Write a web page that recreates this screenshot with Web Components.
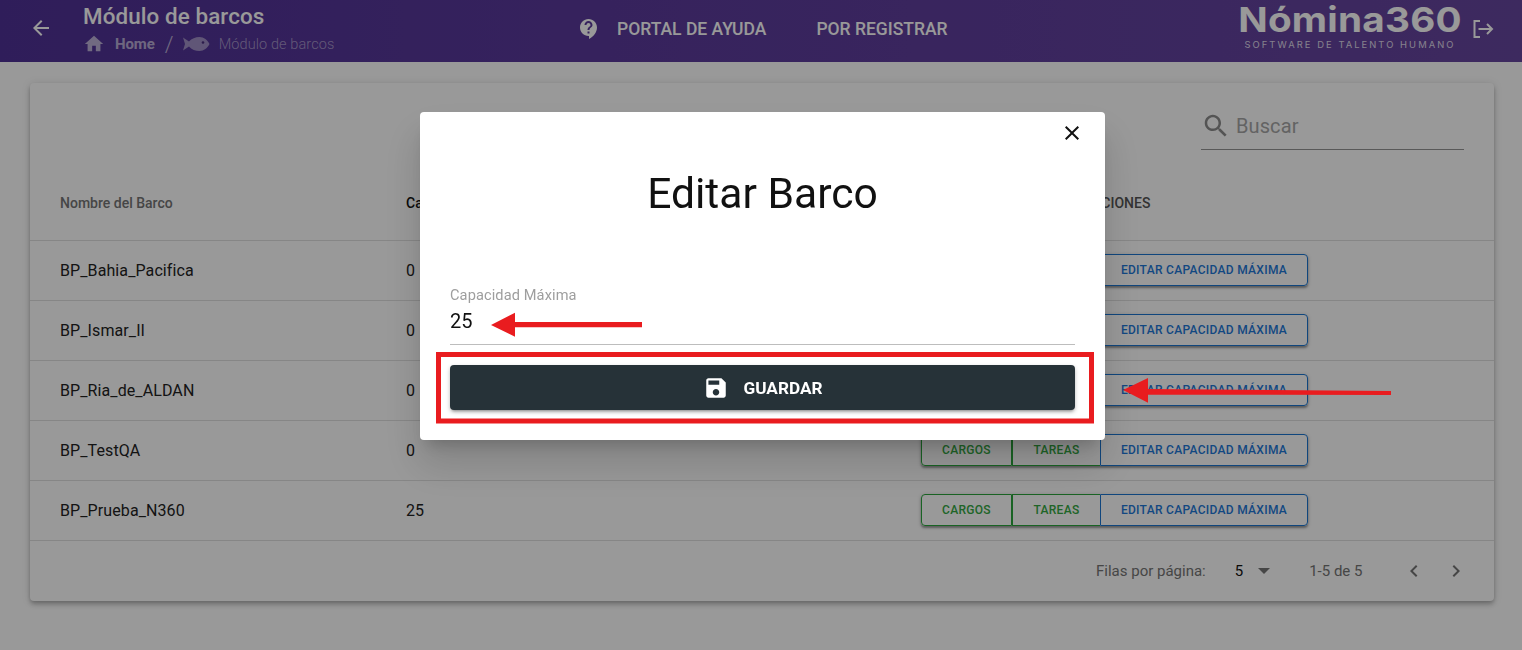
<!DOCTYPE html>
<html lang="es">
<head>
<meta charset="utf-8">
<title>Módulo de barcos</title>
<style>
  html, body { margin: 0; height: 650px; overflow: hidden; background: #fff; font-family: Roboto, "Liberation Sans", sans-serif; letter-spacing: .1px; }
</style>
</head>
<body>
<app-header></app-header>
<boats-card>
  <boat-row name="BP_Bahia_Pacifica" capacity="0"></boat-row>
  <boat-row name="BP_Ismar_II" capacity="0"></boat-row>
  <boat-row name="BP_Ria_de_ALDAN" capacity="0"></boat-row>
  <boat-row name="BP_TestQA" capacity="0"></boat-row>
  <boat-row name="BP_Prueba_N360" capacity="25"></boat-row>
</boats-card>
<edit-dialog></edit-dialog>

<script>
const appHeaderTpl = document.createElement('template')
appHeaderTpl.innerHTML = `
<style>
  :host { display: flex; align-items: stretch; height: 62px; color: #fff; background: linear-gradient(90deg, #4f3196 0%, #5b3a9c 40%, #67469f 100%); }
  .back { width: 83px; display: flex; align-items: center; justify-content: center; box-sizing: border-box; padding: 0 1px 6px 0; }
  .titles { width: 494px; }
  h1 { margin: 3px 0 0; font-size: 22.4px; line-height: 26px; font-weight: 500; }
  .crumbs { display: flex; align-items: center; height: 24px; margin-top: 3px; font-size: 15px; color: rgba(255,255,255,.62); }
  .crumbs b { font-weight: 700; margin-left: 10px; letter-spacing: -.1px; }
  .crumbs i { font-style: normal; font-size: 22px; font-weight: 300; margin: 0 9px 0 10px; }
  .crumbs span { margin-left: 9px; font-weight: 300; font-size: 14.5px; color: rgba(255,255,255,.48); }
  nav { display: flex; align-items: center; font-size: 17.5px; font-weight: 500; padding-bottom: 4px; letter-spacing: 0; }
  nav svg { margin-right: 16px; }
  nav a:last-child { margin-left: 50px; }
  .logo { margin-left: auto; width: 226px; padding-top: 2px; text-align: center; }
  .logo strong { display: block; font: 700 34.5px/36px Inter, sans-serif; letter-spacing: .2px; transform: scaleX(1.12); }
  .logo small { display: block; font: 400 9.4px/10px Inter, sans-serif; letter-spacing: 2.05px; white-space: nowrap; margin-top: 2px; color: rgba(255,255,255,.8); }
  .out { width: 59px; display: flex; align-items: center; padding: 0 0 4px 9px; box-sizing: border-box; }
</style>
<div class="back">
  <svg width="24" height="24" viewBox="0 0 24 24" fill="#fff"><path d="M20 11H7.83l5.59-5.59L12 4l-8 8 8 8 1.41-1.41L7.83 13H20v-2z"/></svg>
</div>
<div class="titles">
  <h1>Módulo de barcos</h1>
  <div class="crumbs">
    <svg width="22" height="22" viewBox="0 0 24 24" fill="rgba(255,255,255,.62)"><path d="M10 20v-6h4v6h5v-8h3L12 3 2 12h3v8z"/></svg>
    <b>Home</b><i>/</i>
    <svg width="27" height="16" viewBox="0 0 27 16"><path fill="rgba(255,255,255,.45)" d="M0 1.5 6 5.5C8.5 2.5 12.5 1 16.5 1 21 1 24.5 4 26.5 8 24.5 12 21 15 16.5 15 12.500 15 8.500 13.500 6 10.500L0 14.500 2 8z"/><circle cx="20" cy="6.500" r="1.300" fill="#4a2f7e"/></svg>
    <span>Módulo de barcos</span>
  </div>
</div>
<nav>
  <svg width="24" height="24" viewBox="0 0 24 24" fill="#fff"><path d="M11.5 2C6.81 2 3 5.81 3 10.5S6.81 19 11.5 19h.5v3c4.86-2.34 8-7 8-11.500C20 5.810 16.190 2 11.500 2zm1 14.500h-2v-2h2v2zm0-3.500h-2c0-3.250 3-3 3-5 0-1.100-.9-2-2-2s-2 .9-2 2h-2c0-2.210 1.790-4 4-4s4 1.790 4 4c0 2.500-3 2.750-3 5z"/></svg>
  <a>PORTAL DE AYUDA</a><a>POR REGISTRAR</a>
</nav>
<div class="logo"><strong>Nómina360</strong><small>SOFTWARE DE TALENTO HUMANO</small></div>
<div class="out">
  <svg width="22" height="22" viewBox="0 0 22 22" fill="none" stroke="#fff" stroke-width="2"><path d="M8 3H2.500v16H8M6.500 11H20M15 6l5 5-5 5"/></svg>
</div>
`
class AppHeader extends HTMLElement {
  constructor() {
    super()
    this.attachShadow({ mode: 'open' })
    this.shadowRoot.appendChild(appHeaderTpl.content.cloneNode(true))
  }
}
customElements.define('app-header', AppHeader)

const boatsCardTpl = document.createElement('template')
boatsCardTpl.innerHTML = `
<style>
  :host { display: block; width: 1464px; height: 518px; margin: 21px 0 0 30px; background: #fff; border-radius: 4px; box-shadow: 0 2px 4px -1px rgba(0,0,0,.2), 0 4px 5px rgba(0,0,0,.14), 0 1px 10px rgba(0,0,0,.12); }
  .tools { height: 92px; display: flex; justify-content: flex-end; padding-right: 30px; }
  .search { width: 263px; height: 67px; box-sizing: border-box; border-bottom: 1px solid #949494; display: flex; align-items: center; padding-top: 20px; font-size: 20px; color: #a6a6a6; }
  .search svg { margin-right: 5px; }
  .head { display: grid; grid-template-columns: 346px 515px 1fr; align-items: center; height: 56px; padding: 0 0 9px 30px; border-bottom: 1px solid #e0e0e0; font-size: 14px; font-weight: 500; color: #757575; letter-spacing: 0; }
  .head .cap { color: #111; }
  .head .act { padding-left: 162px; color: #555; }
  .foot { display: flex; align-items: center; height: 60px; font-size: 15px; letter-spacing: 0; color: #757575; padding-left: 1066px; }
  .foot .n { color: #111; margin-left: 29px; }
  .foot .tri { width: 0; height: 0; margin-left: 15px; border: 6.500px solid transparent; border-top: 6.500px solid #757575; border-bottom: 0; }
  .foot .range { margin-left: 39px; }
  .foot .p { display: flex; margin-left: 40px; }
  .foot .p svg + svg { margin-left: 18px; }
</style>
<div class="tools">
  <div class="search">
    <svg width="30" height="30" viewBox="0 0 24 24" fill="#8c8c8c"><path d="M15.500 14h-.79l-.28-.27C15.410 12.590 16 11.110 16 9.500 16 5.910 13.090 3 9.500 3S3 5.910 3 9.500 5.910 16 9.500 16c1.610 0 3.090-.59 4.230-1.570l.27.28v.79l5 4.990L20.490 19l-4.990-5zm-6 0C7.010 14 5 11.990 5 9.500S7.010 5 9.500 5 14 7.010 14 9.500 11.990 14 9.500 14z"/></svg>
    Buscar
  </div>
</div>
<div class="head"><span>Nombre del Barco</span><span class="cap">Capacidad Máxima</span><span class="act">ACCIONES</span></div>
<slot></slot>
<div class="foot">
  <span>Filas por página:</span><span class="n">5</span><span class="tri"></span><span class="range">1-5 de 5</span>
  <span class="p">
    <svg width="24" height="24" viewBox="0 0 24 24" fill="#757575"><path d="M15.410 7.410 14 6l-6 6 6 6 1.410-1.410L10.830 12z"/></svg>
    <svg width="24" height="24" viewBox="0 0 24 24" fill="#757575"><path d="M10 6 8.590 7.410 13.170 12l-4.580 4.590L10 18l6-6z"/></svg>
  </span>
</div>
`
class BoatsCard extends HTMLElement {
  constructor() {
    super()
    this.attachShadow({ mode: 'open' })
    this.shadowRoot.appendChild(boatsCardTpl.content.cloneNode(true))
  }
}
customElements.define('boats-card', BoatsCard)

const boatRowTpl = document.createElement('template')
boatRowTpl.innerHTML = `
<style>
  :host { display: grid; grid-template-columns: 346px 515px 1fr; align-items: center; height: 59px; padding-left: 30px; border-bottom: 1px solid #e0e0e0; font-size: 16px; color: #222; }
  .group { display: flex; width: 387px; height: 32px; margin-bottom: 2px; border-radius: 4px; box-shadow: 0 2px 2px rgba(0,0,0,.3), 0 1px 4px rgba(0,0,0,.2); }
  button { all: unset; box-sizing: border-box; text-align: center; font: 500 12px/30px Roboto, sans-serif; letter-spacing: .3px; border: 1px solid; }
  .g { color: #35a843; border-color: #2aa53c; }
  .g1 { width: 91px; border-radius: 4px 0 0 4px; }
  .g2 { width: 88px; border-right: 0; }
  .b { width: 208px; color: #1e78d8; border-color: #1b75d0; border-radius: 0 4px 4px 0; }
</style>
<span class="name"></span><span class="cap"></span>
<div class="group">
  <button class="g g1">CARGOS</button><button class="g g2">TAREAS</button><button class="b">EDITAR CAPACIDAD MÁXIMA</button>
</div>
`
class BoatRow extends HTMLElement {
  constructor() {
    super()
    this.attachShadow({ mode: 'open' })
    this.shadowRoot.appendChild(boatRowTpl.content.cloneNode(true))
    this.shadowRoot.querySelector('.name').innerText = this.getAttribute('name')
    this.shadowRoot.querySelector('.cap').innerText = this.getAttribute('capacity')
  }
}
customElements.define('boat-row', BoatRow)

const editDialogTpl = document.createElement('template')
editDialogTpl.innerHTML = `
<style>
  :host { position: fixed; inset: 0; display: block; background: rgba(0,0,0,.4); }
  .modal { position: absolute; left: 420px; top: 112px; width: 685px; height: 328px; box-sizing: border-box; padding: 0 30px; background: #fff; border-radius: 4px; box-shadow: 0 11px 15px -7px rgba(0,0,0,.2), 0 24px 38px 3px rgba(0,0,0,.14); color: #111; }
  .close { display: flex; justify-content: flex-end; height: 44px; margin-right: -9px; padding-top: 9px; box-sizing: border-box; }
  h2 { margin: 12px 0 0; height: 72px; text-align: center; font-size: 42.6px; line-height: 50px; font-weight: 400; letter-spacing: 0; }
  .field { height: 59px; margin-top: 45px; border-bottom: 1px solid #bdbdbd; }
  label { display: block; font-size: 14.6px; line-height: 20px; color: #9e9e9e; }
  .val { font-size: 20px; line-height: 32px; color: #111; }
  .save { display: flex; align-items: center; justify-content: center; height: 45px; margin-top: 20px; background: #263238; color: #fff; border-radius: 4px; font-size: 17.2px; font-weight: 700; box-shadow: 0 3px 3px -2px rgba(0,0,0,.3), 0 2px 4px rgba(0,0,0,.25); letter-spacing: 0; }
  .save svg { margin-right: 15px; }
  .marks { position: absolute; left: 0; top: 0; width: 1522px; height: 650px; pointer-events: none; }
</style>
<div class="modal">
  <div class="close"><svg width="24" height="24" viewBox="0 0 24 24" fill="#111"><path d="M19 6.410 17.590 5 12 10.590 6.410 5 5 6.410 10.590 12 5 17.590 6.410 19 12 13.410 17.590 19 19 17.590 13.410 12z"/></svg></div>
  <h2>Editar Barco</h2>
  <div class="field"><label>Capacidad Máxima</label><div class="val">25</div></div>
  <div class="save">
    <svg width="26" height="26" viewBox="0 0 24 24" fill="#fff"><path d="M17 3H5c-1.110 0-2 .9-2 2v14c0 1.100.89 2 2 2h14c1.100 0 2-.9 2-2V7l-4-4zm-5 16c-1.660 0-3-1.340-3-3s1.340-3 3-3 3 1.340 3 3-1.340 3-3 3zm3-10H5V5h10v4z"/></svg>
    GUARDAR
  </div>
</div>
<svg class="marks" viewBox="0 0 1522 650">
  <rect x="438.500" y="354.500" width="653" height="66.500" fill="none" stroke="#e91c1f" stroke-width="5"/>
  <path fill="#e91c1f" d="M491 325 515 312.700V322H642V327.300H515V336.700z"/>
  <path fill="#e91c1f" d="M1123 390 1148 378V389L1391 391V395L1148 394.700V402.700z"/>
</svg>
`
class EditDialog extends HTMLElement {
  constructor() {
    super()
    this.attachShadow({ mode: 'open' })
    this.shadowRoot.appendChild(editDialogTpl.content.cloneNode(true))
  }
}
customElements.define('edit-dialog', EditDialog)
</script>
</body>
</html>
